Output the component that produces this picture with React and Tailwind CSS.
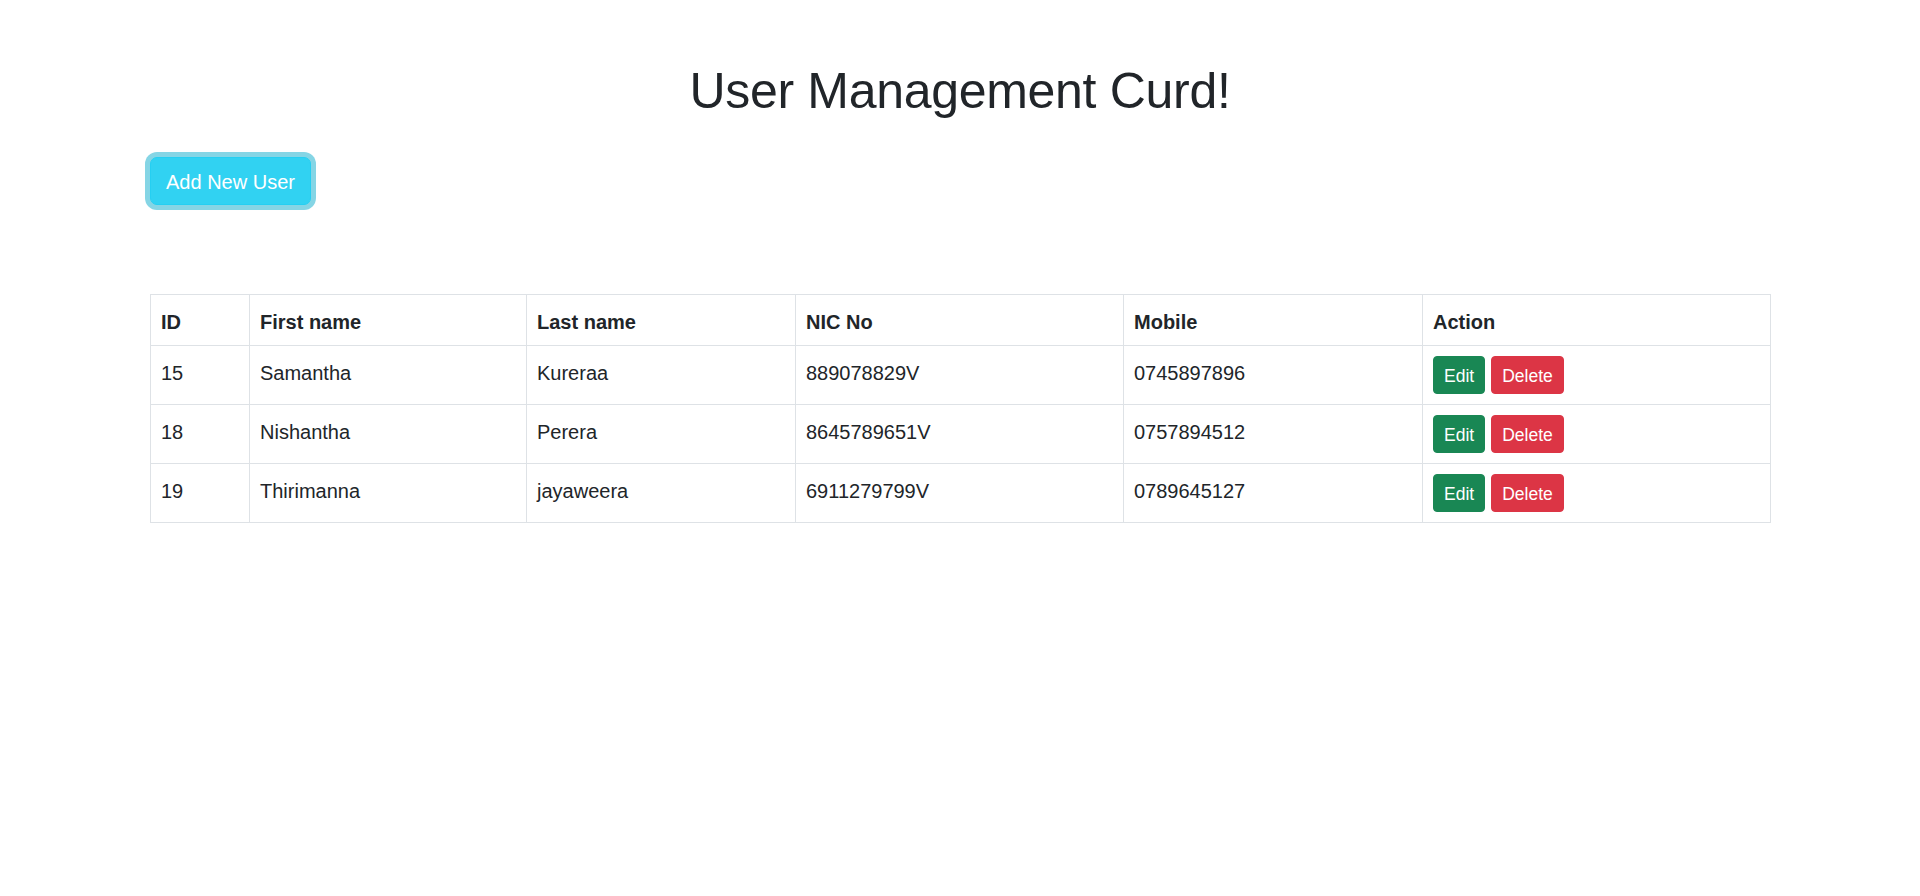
import React from 'react';

// datos de ejemplo
const users = [
  { id: 15, firstName: 'Samantha', lastName: 'Kureraa', nic: '889078829V', mobile: '0745897896' },
  { id: 18, firstName: 'Nishantha', lastName: 'Perera', nic: '8645789651V', mobile: '0757894512' },
  { id: 19, firstName: 'Thirimanna', lastName: 'jayaweera', nic: '6911279799V', mobile: '0789645127' }
];

const cell = 'border border-[#dee2e6] px-[10px] pt-[12px] pb-[8px] align-top text-left';

const App = () => {
  return (
    <div className="min-h-screen bg-white font-['Liberation_Sans',Arial,sans-serif] text-[20px] leading-[30px] text-[#212529]">
      <div className="mx-auto max-w-[1650px] px-[15px]">
        {/* Titulo */}
        <h1 className="pt-[61px] text-center text-[50px] font-normal leading-[60px] tracking-[-0.3px]">User Management Curd!</h1>

        {/* Boton agregar */}
        <div className="mt-[36px]">
          <button className="h-[48px] rounded-[7px] border border-[#25cff2] bg-[#31d2f2] px-[15px] pt-[2px] text-[20px] leading-[30px] text-white shadow-[0_0_0_5px_rgba(11,172,204,0.5)]">
            Add New User
          </button>
        </div>

        {/* Tabla */}
        <table className="mt-[89px] w-full table-fixed border-collapse border border-[#dee2e6]">
          <thead>
            <tr className="font-bold">
              <th className={`${cell} w-[99px]`}>ID</th>
              <th className={`${cell} w-[277px]`}>First name</th>
              <th className={`${cell} w-[269px]`}>Last name</th>
              <th className={`${cell} w-[328px]`}>NIC No</th>
              <th className={`${cell} w-[299px]`}>Mobile</th>
              <th className={`${cell} w-[348px]`}>Action</th>
            </tr>
          </thead>
          <tbody>
            {users.map((u) => (
              <tr key={u.id}>
                <td className={cell}>{u.id}</td>
                <td className={cell}>{u.firstName}</td>
                <td className={cell}>{u.lastName}</td>
                <td className={cell}>{u.nic}</td>
                <td className={cell}>{u.mobile}</td>
                <td className="border border-[#dee2e6] p-[10px] align-top">
                  <div className="flex gap-[6px]">
                    <button className="flex h-[38px] items-center rounded-[4px] border border-[#198754] bg-[#198754] px-[10px] pt-[2px] text-[17.5px] text-white">
                      Edit
                    </button>
                    <button className="flex h-[38px] items-center rounded-[4px] border border-[#dc3545] bg-[#dc3545] px-[10px] pt-[2px] text-[17.5px] text-white">
                      Delete
                    </button>
                  </div>
                </td>
              </tr>
            ))}
          </tbody>
        </table>
      </div>
    </div>
  );
};

export default App;
